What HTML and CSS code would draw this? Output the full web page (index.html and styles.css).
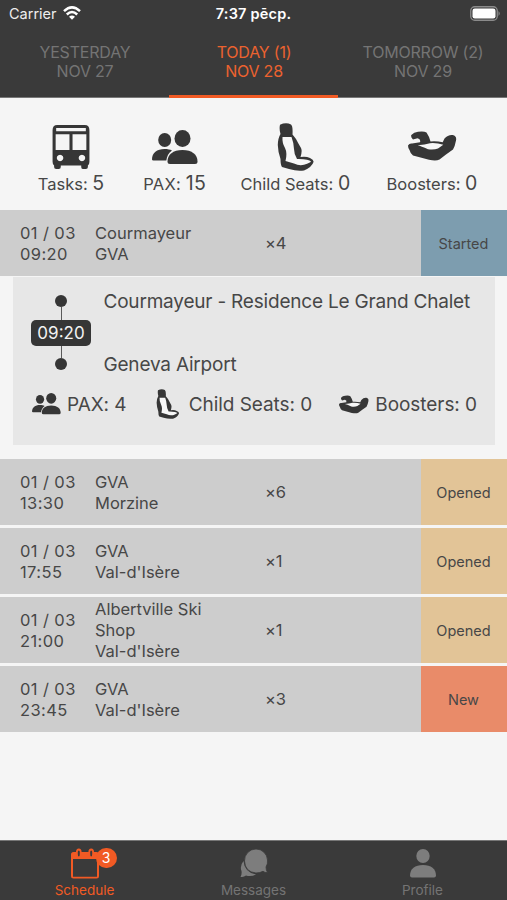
FILE: index.html
```html
<!DOCTYPE html>
<html lang="en">
<head>
<meta charset="utf-8">
<title>Schedule</title>
<link rel="stylesheet" href="styles.css">
</head>
<body>
<svg class="defs" aria-hidden="true">
  <symbol id="people" viewBox="0 0 46 35">
    <ellipse cx="12.700" cy="10" rx="6.500" ry="7"/>
    <path d="M0 29.500C0 23 5 19 12.500 19c3.200 0 5.500.5 7.500 1.500C16.500 23 15 26 14.300 30.500H1.500Q0 30.500 0 29.500Z"/>
    <ellipse cx="30.500" cy="8.500" rx="8" ry="8.500"/>
    <path d="M15.500 31.500C15.500 24.500 21 20 30.500 20S45.500 24.500 45.500 31.500Q45.500 34 43 34H18Q15.500 34 15.500 31.500Z"/>
  </symbol>
  <symbol id="seat" viewBox="0 0 38 48">
    <path d="M3 1.800Q9-1 14 1.500 16 3 15.500 11.500L19 16Q21 20 24 25 25.500 28 23.500 34 29 33 33 35 37 37 36.500 39 35 44 27 47.500 20 48.500 12 46L5 44Q3.500 42 3.500 36 1 29 .8 22 1 15 3.500 11Q2 6 3 1.800Z"/>
    <path class="cushion" d="M5.500 14Q5 20 8 25 10.500 30 8.500 38L17 40.500Q22 43 27 41.800 34 39.500 34 38.500 32 35.800 20 36 17 31 17 26 16.500 19 14.500 14Z"/>
  </symbol>
  <symbol id="booster" viewBox="0 0 49 30">
    <path d="M3.300 4Q6 1 10 .7 16-.2 18.500 1.500 21 5 22.500 10.500 29 10 34.700 11.300L36.500 7.500Q40 3.500 44.700 4 49 5 48 9.500 47 15 45 18.500L38 23.500 31.500 28.500Q28 30.300 21 28.700L5 24.500Q2.500 23 1.500 19 0 17 0 14.500 1.500 12 4 12.500L12 11.300Q13 8 9.500 7.300L5 8.500Q2.500 6 3.300 4Z"/>
    <path class="cushion" d="M9.700 14.200Q13 15 20 18.200 26 19 30 17.500L35.300 13.800Q29 11.700 22 12.200 17 13.800 9.700 14.200Z"/>
  </symbol>
</svg>

<header class="header">
  <div class="status">
    <div class="carrier"><span>Carrier</span>
      <svg class="wifi" viewBox="0 0 18 14"><g fill="none" stroke="#fff" stroke-width="2.500"><path d="M1 5.200Q9-2.500 17 5.200"/><path d="M3.800 8.500Q9 3.500 14.200 8.500"/></g><path fill="#fff" d="M6 10.700Q9 8.200 12 10.700L9 13.800Z"/></svg>
    </div>
    <div class="clock">7:37 pēcp.</div>
    <div class="power"><svg class="battery" viewBox="0 0 31 15"><rect x=".75" y=".75" width="26.500" height="13.500" rx="4" fill="none" stroke="#8b8b8b" stroke-width="1.300"/><rect x="2.500" y="2.500" width="23" height="10" rx="2.300" fill="#fff"/><path fill="#8b8b8b" d="M28.500 5Q31 7.500 28.500 10Z"/></svg></div>
  </div>
  <nav class="days">
    <a class="day">YESTERDAY<br>NOV 27</a>
    <a class="day active">TODAY (1)<br>NOV 28</a>
    <a class="day">TOMORROW (2)<br>NOV 29</a>
  </nav>
</header>

<main class="content">
  <section class="totals">
    <div class="total tasks">
      <svg class="bus" viewBox="0 0 37 43"><path fill-rule="evenodd" d="M5 0H32Q36.500 0 36.500 5V36Q36.500 39 35 39.500V41Q35 43 33 43H30Q28.500 43 28.500 41V39.500H8.500V41Q8.500 43 6.500 43H4Q2 43 2 41V39.500Q.5 39 .5 36V5Q.5 0 5 0ZM4 3V6.200H33V3ZM3.500 9V24.500H17V9ZM20 9V24.500H33.500V9ZM7.800 29a3.200 3.200 0 1 0 .01 0ZM29.200 29a3.200 3.200 0 1 0 .01 0Z"/></svg>
      <div class="label">Tasks: <b>5</b></div>
    </div>
    <div class="total pax"><svg class="people"><use href="#people"/></svg><div class="label">PAX: <b>15</b></div></div>
    <div class="total seats"><svg class="seat"><use href="#seat"/></svg><div class="label">Child Seats: <b>0</b></div></div>
    <div class="total boosters"><svg class="booster"><use href="#booster"/></svg><div class="label">Boosters: <b>0</b></div></div>
  </section>

  <section class="trips">
    <article class="trip">
      <div class="when">01 / 03<br>09:20</div><div class="route">Courmayeur<br>GVA</div><div class="count">×4</div><div class="state started">Started</div>
    </article>
    <div class="details">
      <div class="journey">
        <div class="line"><i class="dot"></i><i class="bar"></i><span class="time">09:20</span><i class="bar"></i><i class="dot"></i></div>
        <div class="places"><span class="from">Courmayeur - Residence Le Grand Chalet</span><span class="to">Geneva Airport</span></div>
      </div>
      <div class="needs">
        <div class="need"><svg class="people"><use href="#people"/></svg><span>PAX: 4</span></div>
        <div class="need"><svg class="seat"><use href="#seat"/></svg><span>Child Seats: 0</span></div>
        <div class="need"><svg class="booster"><use href="#booster"/></svg><span>Boosters: 0</span></div>
      </div>
    </div>
    <article class="trip">
      <div class="when">01 / 03<br>13:30</div><div class="route">GVA<br>Morzine</div><div class="count">×6</div><div class="state opened">Opened</div>
    </article>
    <article class="trip">
      <div class="when">01 / 03<br>17:55</div><div class="route">GVA<br>Val-d'Isère</div><div class="count">×1</div><div class="state opened">Opened</div>
    </article>
    <article class="trip">
      <div class="when">01 / 03<br>21:00</div><div class="route">Albertville Ski Shop<br>Val-d'Isère</div><div class="count">×1</div><div class="state opened">Opened</div>
    </article>
    <article class="trip">
      <div class="when">01 / 03<br>23:45</div><div class="route">GVA<br>Val-d'Isère</div><div class="count">×3</div><div class="state new">New</div>
    </article>
  </section>
</main>

<nav class="tabs">
  <a class="tab active">
    <span class="tab-icon"><svg class="calendar" viewBox="0 0 28 31"><path fill-rule="evenodd" d="M2.500 4H5Q5 .5 7.800 .5T10.600 4H17.400Q17.400 .5 20.200 .5T23 4H25.500Q28 4 28 6.500V28Q28 30.500 25.500 30.500H2.500Q0 30.500 0 28V6.500Q0 4 2.500 4ZM2 11V28.700H26V11ZM7.800 2.500Q6.800 2.500 6.800 4V6Q6.800 8.500 7.800 8.500T8.800 6V4Q8.800 2.500 7.800 2.500ZM20.200 2.500Q19.200 2.500 19.200 4V6Q19.200 8.500 20.200 8.500T21.200 6V4Q21.200 2.500 20.200 2.500Z"/></svg><span class="badge">3</span></span>
    <span>Schedule</span>
  </a>
  <a class="tab">
    <span class="tab-icon"><svg class="chat" viewBox="0 0 28 29"><path d="M3.500 12Q4.500 23.500 16 25.500 11 28 6 26.500 3.500 28.500 .5 27.800 2 26 1.500 22-.5 17 3.500 12Z"/><path d="M16 0A11.500 11.500 0 0 0 4.500 12Q5 23 16 24 20 24 23 22.300 25 24 27.500 23.500 26 21 26 18 28 15 27.500 11A11.500 11.500 0 0 0 16 0Z" stroke="#3a3a3a" stroke-width=".8"/></svg></span>
    <span>Messages</span>
  </a>
  <a class="tab">
    <span class="tab-icon"><svg class="person" viewBox="0 0 26 29"><ellipse cx="13" cy="7" rx="6.700" ry="7"/><path d="M0 26.500C0 20 5 16 13 16S26 20 26 26.500Q26 28.500 24 28.500H2Q0 28.500 0 26.500Z"/></svg></span>
    <span>Profile</span>
  </a>
</nav>
</body>
</html>
```
FILE: styles.css
```css
* { box-sizing: border-box; }
body { margin: 0; height: 900px; display: flex; flex-direction: column; background: #f5f5f5; color: #474747; font-family: Inter, "Liberation Sans", sans-serif; overflow: hidden; }
svg { display: block; fill: #363636; flex: none; }
.cushion { fill: #f7f7f7; }
.defs { width: 0; height: 0; position: absolute; }
.header { height: 98px; background: #3a3a3a; color: #fff; flex: none; display: flex; flex-direction: column; border-bottom: 1px solid #777; }
.status { height: 28px; display: grid; grid-template-columns: 1fr 1fr 1fr; align-items: center; font-size: 14.500px; line-height: 28px; }
.carrier { display: flex; align-items: center; gap: 6px; padding-left: 9px; color: #eee; }
.wifi { width: 18px; height: 14px; margin-top: -2px; }
.clock { text-align: center; font-weight: 600; letter-spacing: .2px; white-space: nowrap; }
.power { display: flex; justify-content: flex-end; padding-right: 6px; }
.battery { width: 31px; height: 15px; margin-top: -2px; }
.days { flex: 1; display: grid; grid-template-columns: 1fr 1fr 1fr; margin-bottom: -1px; }
.day { text-align: center; padding: 15px 0 0 1px; font-size: 16px; line-height: 19px; letter-spacing: -.2px; color: #747474; white-space: nowrap; }
.day.active { color: #ec622f; border-bottom: 3px solid #f15a24; }
.content { flex: 1; }
.totals { height: 112px; display: grid; grid-template-columns: 66px 64px 112px 92px; justify-content: space-between; padding: 24px 28px 0 38px; }
.total { display: flex; flex-direction: column; align-items: center; justify-content: space-between; height: 74px; }
.label { font-size: 16.500px; line-height: 24px; white-space: nowrap; }
.label b { font-weight: 400; font-size: 19.500px; }
.pax .label { letter-spacing: .25px; }
.pax { margin-left: 3px; margin-right: -3px; }
.boosters { margin-left: -1px; margin-right: 1px; }
.bus { width: 38px; height: 44px; margin-top: 3px; }
.pax .people { width: 46px; height: 35px; margin-top: 8px; }
.seats .seat { width: 38px; height: 48px; margin: 1px 0 0 1px; }
.boosters .booster { width: 49px; height: 30px; margin: 9px 0 0 2px; }
.trips { display: flex; flex-direction: column; gap: 3px; }
.trip { height: 66px; background: #cdcdcd; display: grid; grid-template-columns: 75px 170px 1fr 86px; align-items: center; padding-left: 20px; font-size: 16.500px; line-height: 20.800px; }
.when, .route, .count { padding-top: 1px; }
.when { letter-spacing: .4px; }
.route { width: 130px; }
.count { letter-spacing: -.2px; }
.state { height: 100%; display: flex; align-items: center; justify-content: center; padding: 2px 1px 0 0; font-size: 14.500px; }
.started { background: #7d9daf; }
.opened { background: #e2c497; }
.new { background: #e98b69; }
.details { height: 168px; margin: -2px 12px 11px 13px; background: #e7e7e7; font-size: 19px; padding-top: 13px; }
.journey { display: flex; height: 88px; }
.line { width: 60px; margin-left: 18px; display: flex; flex-direction: column; align-items: center; padding-top: 5px; height: 80px; }
.dot { width: 12px; height: 12px; border-radius: 50%; background: #363636; }
.bar { width: 1px; flex: 1; background: #5a5a5a; }
.time { width: 60px; height: 26px; border-radius: 5px; background: #363636; color: #f2f2f2; font-size: 17px; line-height: 26px; text-align: center; }
.places { margin-left: 12.500px; display: flex; flex-direction: column; justify-content: space-between; height: 86px; line-height: 23px; letter-spacing: -.2px; white-space: nowrap; }
.needs { height: 52px; display: flex; justify-content: space-between; align-items: center; padding: 0 18px 0 19px; white-space: nowrap; letter-spacing: -.06px; }
.need { display: flex; align-items: center; gap: 6px; }
.need .people { width: 29px; height: 22px; }
.need .seat { width: 24px; height: 30px; margin-right: 3px; }
.need .booster { width: 30px; height: 19px; }
.need:nth-child(2) { padding-left: 2px; }
.tabs { height: 60px; background: #3a3a3a; border-top: 1px solid #777; display: grid; grid-template-columns: 1fr 1fr 1fr; }
.tab { display: flex; flex-direction: column; align-items: center; color: #747474; font-size: 13.500px; line-height: 17px; padding-top: 7px; }
.tab svg { fill: #7d7d7d; }
.tab.active { color: #f15a24; }
.tab.active svg { fill: #f15a24; }
.tab-icon { position: relative; height: 34px; }
.calendar { width: 28px; height: 31px; }
.chat { width: 28px; height: 29px; margin-top: 1px; }
.person { width: 26px; height: 29px; margin-top: 1px; }
.badge { position: absolute; left: 25px; top: 0; width: 21px; height: 20px; border-radius: 10px; background: #f15a24; color: #fff; text-align: center; font-size: 14px; line-height: 20px; }
```
